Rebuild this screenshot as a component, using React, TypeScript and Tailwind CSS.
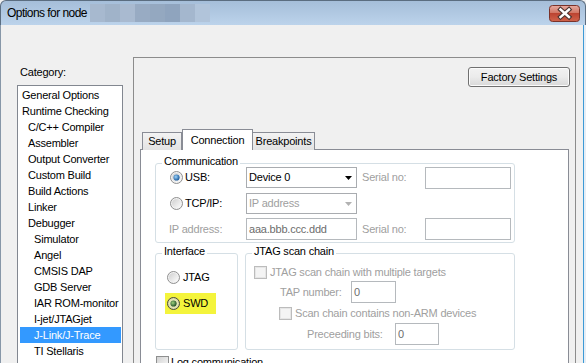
import React from "react";

const CATEGORIES: [string, number][] = [
  ["General Options", 0],
  ["Runtime Checking", 0],
  ["C/C++ Compiler", 1],
  ["Assembler", 1],
  ["Output Converter", 1],
  ["Custom Build", 1],
  ["Build Actions", 1],
  ["Linker", 1],
  ["Debugger", 1],
  ["Simulator", 2],
  ["Angel", 2],
  ["CMSIS DAP", 2],
  ["GDB Server", 2],
  ["IAR ROM-monitor", 2],
  ["I-jet/JTAGjet", 2],
  ["J-Link/J-Trace", 2],
  ["TI Stellaris", 2],
];

const INDENT = ["pl-[2px]", "pl-[8px]", "pl-[14px]"];
const MOSAIC = ["#a7b9cf", "#a0b3c9", "#a9bad0", "#98abc3", "#94a8c0", "#8fa4be", "#a4b7ce", "#b1c4da"];

function Radio({ on = false, hl = false }: { on?: boolean; hl?: boolean }) {
  return (
    <svg width="13" height="13" viewBox="0 0 13 13" className="shrink-0">
      <defs>
        <linearGradient id="radioFill" x1="0" y1="0" x2="1" y2="1">
          <stop offset="0" stopColor="#cfcfcf" />
          <stop offset="1" stopColor="#fdfdfd" />
        </linearGradient>
        <radialGradient id="radioDot" cx="0.4" cy="0.4" r="0.6">
          <stop offset="0" stopColor="#9dd4fb" />
          <stop offset="1" stopColor="#1a5a9c" />
        </radialGradient>
        <radialGradient id="radioDotHl" cx="0.4" cy="0.4" r="0.6">
          <stop offset="0" stopColor="#9ed27c" />
          <stop offset="1" stopColor="#24502a" />
        </radialGradient>
      </defs>
      <circle cx="6.5" cy="6.5" r="6" fill={hl ? "#d9d9a8" : "#f2f2f2"} stroke={hl ? "#4a4c3a" : "#8f8f8f"} />
      <circle cx="6.5" cy="6.5" r="4.6" fill={hl ? "#e6e6b4" : "url(#radioFill)"} />
      {on && <circle cx="6.5" cy="6.5" r="3.1" fill={hl ? "url(#radioDotHl)" : "url(#radioDot)"} />}
    </svg>
  );
}

function Check({ disabled = false }: { disabled?: boolean }) {
  return disabled ? (
    <div className="w-[13px] h-[13px] shrink-0 border border-[#bcbcbc] bg-[#f4f4f4] shadow-[inset_0_0_0_1px_#e6e6e6]" />
  ) : (
    <div className="w-[13px] h-[13px] shrink-0 border border-[#8e8f8f] bg-linear-to-br from-[#d2d2d2] to-[#fafafa]" />
  );
}

function Combo({ text, disabled = false }: { text: string; disabled?: boolean }) {
  return (
    <div className="w-[111px] h-[21px] shrink-0 border border-[#a9acb0] bg-white flex items-center pl-[2px] pr-[4px]">
      <span className={disabled ? "flex-1 text-[#a0a0a0]" : "flex-1 text-black"}>{text}</span>
      <svg width="7" height="4" viewBox="0 0 7 4">
        <path d="M0 0h7L3.5 4z" fill={disabled ? "#b2b2b2" : "#000"} />
      </svg>
    </div>
  );
}

function Group({ title, className, children }: { title: string; className: string; children?: React.ReactNode }) {
  return (
    <div className={"border border-[#d5dfe5] rounded-[3px] " + className}>
      <div className="-mt-[9px] ml-[6px] px-[2px] w-fit bg-white text-black">{title}</div>
      {children}
    </div>
  );
}

function TitleBar() {
  return (
    <div className="h-[25px] flex items-center border-t border-l border-r border-[#5b6d80] rounded-t-[6px] bg-linear-to-b from-[#a5bed9] to-[#bcd3eb]">
      <span className="ml-[6px] text-[12px] tracking-[-0.55px] leading-[16px] text-black">Options for node</span>
      <div className="ml-[3px] flex h-[18px]">
        {MOSAIC.map((c, i) => (
          <div key={i} className="w-[15px] h-full" style={{ background: c }} />
        ))}
      </div>
      <svg width="31" height="17" viewBox="0 0 31 17" className="ml-auto mr-[5px]">
        <defs>
          <linearGradient id="closeBg" x1="0" y1="0" x2="0" y2="1">
            <stop offset="0" stopColor="#e6aba1" />
            <stop offset="0.45" stopColor="#d27866" />
            <stop offset="0.5" stopColor="#bc4431" />
            <stop offset="1" stopColor="#d0644c" />
          </linearGradient>
        </defs>
        <rect x="0.5" y="0.5" width="30" height="16" rx="3" fill="url(#closeBg)" stroke="#7a3229" />
        <path d="M11.5 4.5 L20 12 M20 4.5 L11.5 12" stroke="#4b3430" strokeWidth="4.6" strokeLinecap="square" />
        <path d="M11.5 4.5 L20 12 M20 4.5 L11.5 12" stroke="#ffffff" strokeWidth="2.4" strokeLinecap="square" />
      </svg>
    </div>
  );
}

export default function App() {
  return (
    <div className="w-[586px] h-[363px] overflow-hidden bg-[#f0f0f0] text-[11px] leading-[13px] tracking-[-0.2px] text-black font-['Liberation_Sans',Arial,sans-serif]">
      <TitleBar />
      <div className="flex h-[338px]">
        <div className="w-px bg-[#8797a8]" />

        {/* category list */}
        <div className="w-[132px] shrink-0">
          <div className="pl-[19px] pt-[41px]">Category:</div>
          <div className="ml-[16px] mt-[6px] w-[106px] h-[300px] border border-[#828790] bg-white pt-px">
            {CATEGORIES.map(([name, level]) => {
              const sel = name === "J-Link/J-Trace";
              return (
                <div
                  key={name}
                  className={
                    "ml-[2px] mr-px h-[16px] leading-[16px] whitespace-nowrap " +
                    INDENT[level] +
                    (sel ? " bg-[#3399ff] text-white" : " text-black")
                  }
                >
                  {name}
                </div>
              );
            })}
          </div>
        </div>

        {/* options page */}
        <div className="w-[443px] h-[320px] shrink-0 mt-[32px] border border-[#8c8c8c]">
          <div className="flex justify-end pr-[5px] pt-[9px]">
            <div className="w-[102px] h-[20px] rounded-[3px] border border-[#707070] bg-linear-to-b from-[#f2f2f2] via-[#ebebeb] to-[#d8d8d8] shadow-[inset_0_0_0_1px_#fbfbfb] flex items-center justify-center">
              Factory Settings
            </div>
          </div>

          <div className="pl-[6px] mt-[42px]">
            <div className="flex items-end h-[21px]">
              <div className="ml-[2px] w-[40px] h-[18px] border border-b-0 border-[#898c95] bg-linear-to-b from-[#f3f3f3] to-[#e3e3e3] flex items-center justify-center">
                Setup
              </div>
              <div className="relative z-10 w-[71px] h-[21px] border border-b-0 border-[#898c95] bg-white flex items-center justify-center">
                Connection
              </div>
              <div className="ml-[-1px] w-[63px] h-[18px] border border-b-0 border-[#898c95] bg-linear-to-b from-[#f3f3f3] to-[#e3e3e3] flex items-center justify-center">
                Breakpoints
              </div>
            </div>

            <div className="-mt-px w-[429px] h-[240px] border border-[#898c95] bg-white pl-[14px] pt-[13px]">
              <Group title="Communication" className="w-[360px] pb-[2px]">
                <div className="-mt-px h-[21px] flex items-center">
                  <div className="w-[90px] shrink-0 flex items-center pl-[14px]">
                    <Radio on />
                    <span className="ml-[2px]">USB:</span>
                  </div>
                  <Combo text="Device 0" />
                  <span className="ml-[5px] w-[63px] shrink-0 text-[#a0a0a0]">Serial no:</span>
                  <div className="self-start w-[86px] h-[22px] border border-[#b5b9bd] bg-white" />
                </div>
                <div className="mt-[5px] h-[21px] flex items-center">
                  <div className="w-[90px] shrink-0 flex items-center pl-[14px]">
                    <Radio />
                    <span className="ml-[2px]">TCP/IP:</span>
                  </div>
                  <Combo text="IP address" disabled />
                </div>
                <div className="mt-[4px] h-[22px] flex items-center">
                  <span className="w-[90px] shrink-0 pl-[13px] text-[#a0a0a0]">IP address:</span>
                  <div className="w-[111px] h-[22px] shrink-0 border border-[#b5b9bd] bg-white flex items-center pl-[2px] text-[#6d6d6d]">
                    aaa.bbb.ccc.ddd
                  </div>
                  <span className="ml-[5px] w-[63px] shrink-0 text-[#a0a0a0]">Serial no:</span>
                  <div className="w-[86px] h-[22px] border border-[#b5b9bd] bg-white" />
                </div>
              </Group>

              <div className="mt-[10px] flex gap-[7px]">
                <Group title="Interface" className="w-[83px] h-[97px]">
                  <div className="mt-[9px] ml-[9px] pl-[2px] w-fit h-[21px] flex items-center">
                    <Radio />
                    <span className="ml-[3px]">JTAG</span>
                  </div>
                  <div className="mt-[5px] ml-[9px] pl-[2px] w-[51px] h-[21px] flex items-center bg-[#f4f43c]">
                    <Radio on hl />
                    <span className="ml-[3px]">SWD</span>
                  </div>
                </Group>

                <Group title="JTAG scan chain" className="w-[270px] h-[97px]">
                  <div className="mt-[8px] ml-[8px] h-[13px] flex items-center">
                    <Check disabled />
                    <span className="ml-[3px] text-[#a0a0a0]">JTAG scan chain with multiple targets</span>
                  </div>
                  <div className="mt-[2px] ml-[34px] h-[22px] flex items-center">
                    <span className="w-[71px] shrink-0 text-[#a0a0a0]">TAP number:</span>
                    <div className="w-[45px] h-[22px] border border-[#b5b9bd] bg-white flex items-center pl-[2px] text-[#6d6d6d]">0</div>
                  </div>
                  <div className="mt-[4px] ml-[33px] h-[13px] flex items-center">
                    <Check disabled />
                    <span className="ml-[3px] text-[#a0a0a0]">Scan chain contains non-ARM devices</span>
                  </div>
                  <div className="mt-[3px] ml-[61px] h-[22px] flex items-center">
                    <span className="w-[88px] shrink-0 text-[#a0a0a0]">Preceeding bits:</span>
                    <div className="w-[44px] h-[22px] border border-[#b5b9bd] bg-white flex items-center pl-[2px] text-[#6d6d6d]">0</div>
                  </div>
                </Group>
              </div>

              <div className="mt-[6px] ml-px flex items-center">
                <Check />
                <span className="ml-[2px]">Log communication</span>
              </div>
            </div>
          </div>
        </div>

        <div className="w-[7px]" />
        <div className="w-px bg-[#3d9ad6]" />
        <div className="w-[2px] bg-[#e6eef6]" />
      </div>
    </div>
  );
}
